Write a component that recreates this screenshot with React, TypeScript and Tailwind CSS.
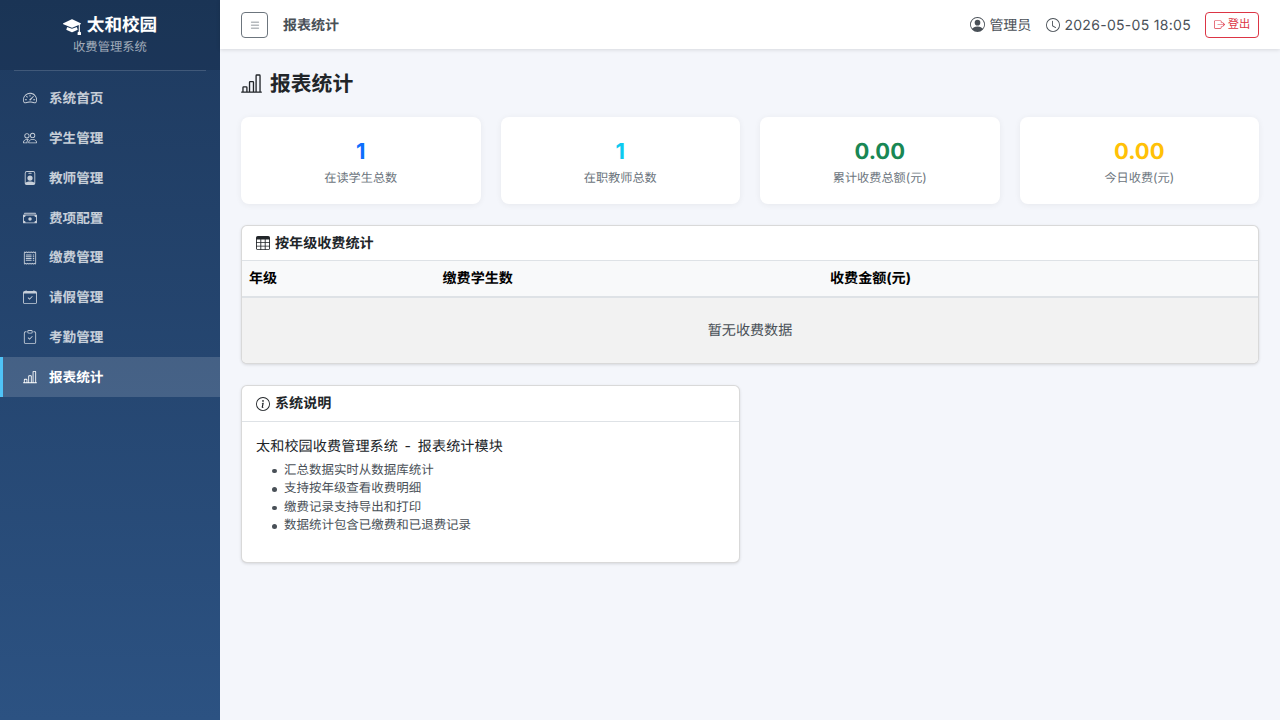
import React from "react";
import {
  BsMortarboardFill, BsSpeedometer2, BsPeople, BsPersonBadge, BsCashStack, BsReceipt,
  BsCalendarCheck, BsClipboardCheck, BsBarChartLine, BsList, BsPersonCircle, BsClock,
  BsBoxArrowRight, BsTable, BsInfoCircle,
} from "react-icons/bs";

const nav = [
  { label: "系统首页", Icon: BsSpeedometer2 },
  { label: "学生管理", Icon: BsPeople },
  { label: "教师管理", Icon: BsPersonBadge },
  { label: "费项配置", Icon: BsCashStack },
  { label: "缴费管理", Icon: BsReceipt },
  { label: "请假管理", Icon: BsCalendarCheck },
  { label: "考勤管理", Icon: BsClipboardCheck },
  { label: "报表统计", Icon: BsBarChartLine, active: true },
];

const stats = [
  { value: "1", label: "在读学生总数", color: "text-[#0d6efd]" },
  { value: "1", label: "在职教师总数", color: "text-[#0dcaf0]" },
  { value: "0.00", label: "累计收费总额(元)", color: "text-[#198754]" },
  { value: "0.00", label: "今日收费(元)", color: "text-[#ffc107]" },
];

const notes = ["汇总数据实时从数据库统计", "支持按年级查看收费明细", "缴费记录支持导出和打印", "数据统计包含已缴费和已退费记录"];

export default function App() {
  return (
    <div className="flex h-[720px] w-[1280px] overflow-hidden bg-[#f4f6fb] text-[#212529] font-['Inter','Noto_Sans_CJK_SC',sans-serif] [text-rendering:geometricPrecision]">
      <aside className="flex w-[220px] shrink-0 flex-col bg-gradient-to-b from-[#1e3a5f] to-[#2c5282]">
        <div className="flex h-[70px] flex-col items-center bg-black/10 pt-[15px]">
          <div className="flex items-center text-[17.6px] font-bold leading-[22px] text-white">
            <BsMortarboardFill className="mr-[6px] h-[18px] w-[18px]" />
            太和校园
          </div>
          <div className="mt-[1px] text-[12.32px] leading-[18px] text-white/60">收费管理系统</div>
        </div>
        <div className="mx-[14px] h-px bg-white/15" />
        <nav className="mt-[7.5px] flex flex-col">
          {nav.map(({ label, Icon, active }) => (
            <div
              key={label}
              className={
                active
                  ? "flex h-[39.8px] items-center border-l-[3px] border-[#4fc3f7] bg-white/15 pl-[20px] text-[13.6px] font-semibold text-white"
                  : "flex h-[39.8px] items-center border-l-[3px] border-transparent pl-[20px] text-[13.6px] font-semibold text-white/75"
              }
            >
              <Icon className="mr-[12px] h-[14px] w-[14px]" />
              <span className="pt-[2px]">{label}</span>
            </div>
          ))}
        </nav>
      </aside>
      <div className="flex min-w-0 flex-1 flex-col">
        <header className="flex h-[49px] shrink-0 items-center justify-between bg-white px-[21px] shadow-[0_1px_4px_rgba(0,0,0,0.12)]">
          <div className="flex items-center">
            <button className="flex h-[26px] w-[27px] items-center justify-center rounded-[4px] border border-[#6c757d] text-[#6c757d]">
              <BsList className="h-[12px] w-[12px]" />
            </button>
            <span className="ml-[15px] pt-[2px] text-[14px] font-semibold text-[#495057]">报表统计</span>
          </div>
          <div className="flex items-center text-[14px] text-[#495057]">
            <BsPersonCircle className="mr-[4px] h-[15px] w-[15px]" />
            <span className="pt-[2px]">管理员</span>
            <BsClock className="ml-[15px] mr-[4px] h-[14px] w-[14px]" />
            <span className="pt-[2px] tracking-[0.3px]">2026-05-05 18:05</span>
            <button className="ml-[14px] flex h-[26px] w-[54px] items-center justify-center rounded-[4px] border border-[#dc3545] text-[11.2px] text-[#dc3545]">
              <BsBoxArrowRight className="mr-[3px] h-[11px] w-[11px]" />
              登出
            </button>
          </div>
        </header>
        <main className="flex-1 px-[21px] pt-[22px]">
          <h1 className="flex h-[28px] items-center text-[20.8px] font-bold text-[#212529]">
            <BsBarChartLine className="mb-[4px] mr-[8px] h-[21px] w-[21px]" />
            报表统计
          </h1>
          <div className="mt-[18px] grid grid-cols-4 gap-[20px]">
            {stats.map((s, i) => (
              <div key={i} className="flex h-[87px] flex-col items-center rounded-[8px] bg-white pt-[21px] shadow-[0_1px_6px_rgba(0,0,0,0.06)]">
                <div className={`text-[22px] font-bold leading-[28px] ${s.color}`}>{s.value}</div>
                <div className="mt-[3px] text-[12.16px] leading-[18px] text-[#6c757d]">{s.label}</div>
              </div>
            ))}
          </div>
          <section className="mt-[21px] overflow-hidden rounded-[6px] border border-black/15 bg-white shadow-[0_1px_3px_rgba(0,0,0,0.12)]">
            <div className="flex h-[35px] items-center border-b border-[#dee2e6] px-[14px] pt-[2px] text-[14.08px] font-semibold text-[#212529]">
              <BsTable className="mb-[2px] mr-[5px] h-[14px] w-[14px]" />
              按年级收费统计
            </div>
            <div className="grid h-[37px] grid-cols-[193.5px_387.5px_1fr] items-center border-b-2 border-[#dee2e6] bg-[#f8f9fa] px-[7px] pt-[1px] text-[14.08px] font-bold text-black">
              <div>年级</div>
              <div>缴费学生数</div>
              <div>收费金额(元)</div>
            </div>
            <div className="flex h-[65px] items-center justify-center bg-[#f2f2f2] text-[14.08px] text-[#495057]">暂无收费数据</div>
          </section>
          <div className="mt-[21px] grid grid-cols-2 gap-[20px]">
            <section className="h-[178px] overflow-hidden rounded-[6px] border border-black/15 bg-white shadow-[0_1px_3px_rgba(0,0,0,0.12)]">
              <div className="flex h-[36px] items-center border-b border-[#dee2e6] px-[14px] text-[14.08px] font-semibold text-[#212529]">
                <BsInfoCircle className="mr-[5px] h-[14px] w-[14px]" />
                系统说明
              </div>
              <div className="px-[14px] pt-[15px]">
                <p className="text-[14.08px] leading-[20px] tracking-[0.12px] [word-spacing:2.5px] text-[#212529]">太和校园收费管理系统 - 报表统计模块</p>
                <ul className="mt-[5px] pl-[16px] text-[12.48px] leading-[18.4px] text-[#495057]">
                  {notes.map((n) => (
                    <li key={n} className="flex items-center">
                      <span className="mr-[7.5px] h-[4.5px] w-[4.5px] shrink-0 rounded-full bg-[#495057]" />
                      {n}
                    </li>
                  ))}
                </ul>
              </div>
            </section>
          </div>
        </main>
      </div>
    </div>
  );
}
